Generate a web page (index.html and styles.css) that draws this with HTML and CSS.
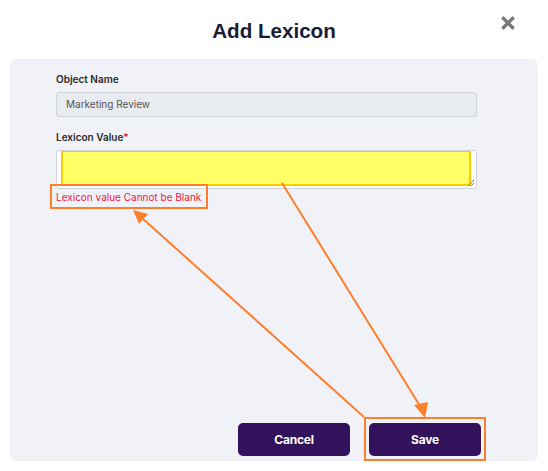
FILE: index.html
```html
<!DOCTYPE html>
<html>
<head>
<meta charset="utf-8">
<link rel="stylesheet" href="styles.css">
</head>
<body>
<div class="modal">
  <div class="header">
    <h1 class="title">Add Lexicon</h1>
    <button class="close" aria-label="Close">
      <svg width="14" height="14" viewBox="0 0 14 14"><path d="M2.5 2.5 L11.5 11.5 M11.5 2.5 L2.5 11.5" stroke="#7a7a7a" stroke-width="3.4" stroke-linecap="square"/></svg>
    </button>
  </div>
  <div class="panel">
    <div class="form">
      <label class="label">Object Name</label>
      <div class="input readonly">Marketing Review</div>
      <label class="label second">Lexicon Value<span class="req">*</span></label>
      <div class="textarea">
        <div class="highlight"></div>
        <svg class="grip" width="8" height="8" viewBox="0 0 8 8"><path d="M7 1 L1 7 M7 4 L4 7" stroke="#777" stroke-width="1"/></svg>
      </div>
      <div class="error">Lexicon value Cannot be Blank</div>
      <div class="actions">
        <button class="btn">Cancel</button>
        <button class="btn">Save</button>
      </div>
    </div>
  </div>
  <svg class="annot" width="548" height="471" viewBox="0 0 548 471">
    <rect x="51" y="185" width="156" height="23" fill="none" stroke="#fd7f2c" stroke-width="2"/>
    <rect x="365" y="418" width="120" height="42" fill="none" stroke="#fd7f2c" stroke-width="2"/>
    <line x1="364" y1="417" x2="142" y2="218" stroke="#fd7f2c" stroke-width="2"/>
    <polygon points="133,210 148,214 139,224" fill="#fd7f2c"/>
    <line x1="282" y1="183" x2="420" y2="406" stroke="#fd7f2c" stroke-width="2"/>
    <polygon points="425,418 414,405 428,402" fill="#fd7f2c"/>
  </svg>
</div>
</body>
</html>
```
FILE: styles.css
```css
html, body {
  margin: 0;
  padding: 0;
  background: #ffffff;
}
.modal {
  position: relative;
  width: 548px;
  height: 471px;
  font-family: Inter, "Noto Sans", sans-serif;
}
.header {
  height: 59px;
  display: flex;
  align-items: center;
  justify-content: center;
  position: relative;
}
.title {
  margin: 0;
  margin-top: 2px;
  font-family: "Liberation Sans", Arial, sans-serif;
  font-weight: 700;
  font-size: 20.6px;
  color: #1b1b38;
}
.close {
  position: absolute;
  left: 501px;
  top: 16px;
  width: 14px;
  height: 14px;
  padding: 0;
  border: 0;
  background: transparent;
  display: flex;
}
.panel {
  margin: 0 10px;
  height: 402px;
  background: #f1f2f7;
  border-radius: 7px;
  box-sizing: border-box;
  padding: 13px 61px 5px 46px;
}
.form {
  display: flex;
  flex-direction: column;
  height: 100%;
}
.label {
  font-size: 10px;
  font-weight: 600;
  line-height: 14px;
  color: #2a2a2a;
  margin-bottom: 6px;
}
.label.second {
  margin-top: 13px;
}
.req {
  color: #e8112d;
}
.input {
  height: 25px;
  box-sizing: border-box;
  border: 1px solid #cfd3d8;
  border-radius: 3px;
  padding: 0 9px;
  font-size: 10px;
  line-height: 23px;
  color: #555;
}
.readonly {
  background: #e8ebef;
}
.textarea {
  position: relative;
  height: 39px;
  box-sizing: border-box;
  border: 1px solid #cfd3d8;
  border-radius: 3px;
  background: #ffffff;
  padding: 0 5px 3px 4px;
}
.highlight {
  height: 35px;
  box-sizing: border-box;
  background: #ffff66;
  border: 2px solid #ffcc00;
  border-top-width: 1px;
}
.grip {
  position: absolute;
  right: 1px;
  bottom: 1px;
}
.error {
  margin-top: 1px;
  font-size: 10px;
  line-height: 14px;
  color: #f2163d;
}
.actions {
  margin-top: auto;
  display: flex;
  justify-content: flex-end;
  gap: 19px;
  margin-right: -4px;
}
.btn {
  width: 112px;
  height: 33px;
  border: 0;
  border-radius: 5px;
  background: #32135b;
  color: #ffffff;
  font-family: Inter, "Noto Sans", sans-serif;
  font-weight: 700;
  font-size: 12px;
  letter-spacing: -0.2px;
}
.annot {
  position: absolute;
  left: 0;
  top: 0;
  pointer-events: none;
}
```
